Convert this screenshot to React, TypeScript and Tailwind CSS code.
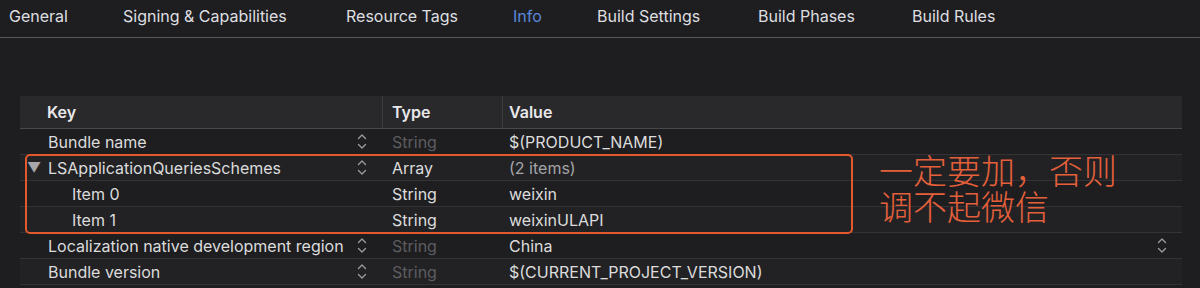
import React from "react";

const tabs = [
  { name: "General", w: "w-[114px]" },
  { name: "Signing & Capabilities", w: "w-[223px]" },
  { name: "Resource Tags", w: "w-[167px]" },
  { name: "Info", w: "w-[84px]", active: true },
  { name: "Build Settings", w: "w-[161px]" },
  { name: "Build Phases", w: "w-[154px]" },
  { name: "Build Rules", w: "w-[150px]" },
];

type Row = {
  key: string;
  type: string;
  value: string;
  indent?: boolean;
  expand?: boolean;
  dimType?: boolean;
  dimValue?: boolean;
  stepper?: boolean;
  rightStepper?: boolean;
  alt?: boolean;
};

const rows: Row[] = [
  { key: "Bundle name", type: "String", value: "$(PRODUCT_NAME)", dimType: true, stepper: true },
  { key: "LSApplicationQueriesSchemes", type: "Array", value: "(2 items)", expand: true, dimValue: true, stepper: true, alt: true },
  { key: "Item 0", type: "String", value: "weixin", indent: true },
  { key: "Item 1", type: "String", value: "weixinULAPI", indent: true, alt: true },
  { key: "Localization native development region", type: "String", value: "China", dimType: true, stepper: true, rightStepper: true },
  { key: "Bundle version", type: "String", value: "$(CURRENT_PROJECT_VERSION)", dimType: true, stepper: true, alt: true },
];

function Stepper() {
  return (
    <svg width="10" height="17" viewBox="0 0 10 17" fill="none" stroke="#9a9a9d" strokeWidth="1.4" strokeLinecap="round" strokeLinejoin="round">
      <path d="M1.5 5.5 L5 2 L8.5 5.5" />
      <path d="M1.5 11.5 L5 15 L8.5 11.5" />
    </svg>
  );
}

export default function App() {
  return (
    <div
      className="w-[1200px] h-[288px] bg-[#1e1e21] overflow-hidden relative text-[16px] text-[#dcdcdc]"
      style={{ fontFamily: 'Inter, "Liberation Sans", "Noto Sans CJK SC", sans-serif' }}
    >
      {/* Tab bar */}
      <div className="flex items-center h-[38px] pl-[9px] border-b border-[#58585b]">
        {tabs.map((t) => (
          <div key={t.name} className={`${t.w} shrink-0 pb-[5px]`}>
            <span className={t.active ? "text-[#5b87d9]" : "text-[#dedee0]"}>{t.name}</span>
          </div>
        ))}
      </div>

      {/* Table */}
      <div className="ml-[20px] mt-[58px] w-[1162px] relative">
        <div className="flex h-[33px] items-center bg-[#29292c] border-b border-[#49494c] font-semibold text-[#e8e8ea]">
          <div className="w-[363px] pl-[27px] h-full flex items-center border-r border-[#3d3d40]">Key</div>
          <div className="w-[120px] pl-[9px] h-full flex items-center border-r border-[#3d3d40]">Type</div>
          <div className="flex-1 pl-[6px]">Value</div>
        </div>
        {rows.map((r) => (
          <div
            key={r.key}
            className={`flex h-[26px] items-center border-b border-[#333336] ${r.alt ? "bg-[#222225]" : "bg-[#1e1e21]"}`}
          >
            <div className="w-[363px] flex items-center pr-[16px]">
              {r.expand ? (
                <span className="pl-[7px] w-[28px] text-[14px] text-[#a8a8ab]">▼</span>
              ) : (
                <span className={r.indent ? "w-[52px]" : "w-[28px]"} />
              )}
              <span className="flex-1 whitespace-nowrap">{r.key}</span>
              {r.stepper && <Stepper />}
            </div>
            <div className={`w-[120px] pl-[9px] ${r.dimType ? "text-[#5c5c5f]" : "text-[#dcdcdc]"}`}>{r.type}</div>
            <div className={`flex-1 pl-[6px] flex items-center pr-[15px] ${r.dimValue ? "text-[#a5a5a8]" : "text-[#dcdcdc]"}`}>
              <span className="flex-1">{r.value}</span>
              {r.rightStepper && <Stepper />}
            </div>
          </div>
        ))}

        {/* Annotation box */}
        <div className="absolute left-[5px] top-[58px] w-[828px] h-[80px] border-2 border-[#e3592c] rounded-[5px]" />
      </div>

      {/* Annotation text */}
      <div
        className="absolute left-[879px] top-[152px] text-[34px] leading-[36px] text-[#e5603a] font-light"
        style={{ fontFamily: '"Noto Sans CJK SC", sans-serif' }}
      >
        <div>一定要加，否则</div>
        <div>调不起微信</div>
      </div>
    </div>
  );
}
